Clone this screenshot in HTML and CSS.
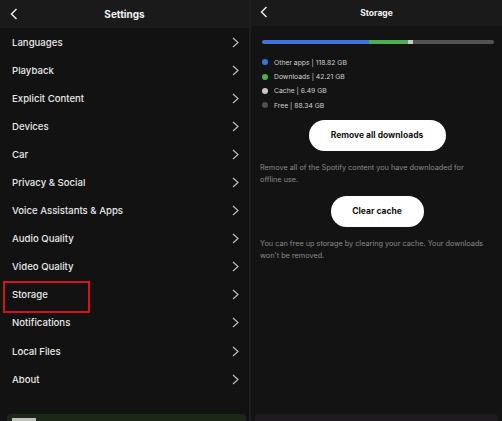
FILE: index.html
```html
<!DOCTYPE html>
<html>
<head>
<meta charset="utf-8">
<link rel="stylesheet" href="styles.css">
</head>
<body>
<div class="screen">
  <section class="panel settings">
    <header class="bar-head">
      <svg class="back" width="8" height="12" viewBox="0 0 8 12"><path d="M6.5 1 L1.5 6 L6.5 11" fill="none" stroke="#e8e8e8" stroke-width="1.5"/></svg>
      <h1 class="title">Settings</h1>
    </header>
    <ul class="list">
      <li class="row"><span>Languages</span><svg class="chev" width="7" height="11" viewBox="0 0 7 11"><path d="M1 1 L6 5.5 L1 10" fill="none" stroke="#bdbdbd" stroke-width="1.2"/></svg></li>
      <li class="row"><span>Playback</span><svg class="chev" width="7" height="11" viewBox="0 0 7 11"><path d="M1 1 L6 5.5 L1 10" fill="none" stroke="#bdbdbd" stroke-width="1.2"/></svg></li>
      <li class="row"><span>Explicit Content</span><svg class="chev" width="7" height="11" viewBox="0 0 7 11"><path d="M1 1 L6 5.5 L1 10" fill="none" stroke="#bdbdbd" stroke-width="1.2"/></svg></li>
      <li class="row"><span>Devices</span><svg class="chev" width="7" height="11" viewBox="0 0 7 11"><path d="M1 1 L6 5.5 L1 10" fill="none" stroke="#bdbdbd" stroke-width="1.2"/></svg></li>
      <li class="row"><span>Car</span><svg class="chev" width="7" height="11" viewBox="0 0 7 11"><path d="M1 1 L6 5.5 L1 10" fill="none" stroke="#bdbdbd" stroke-width="1.2"/></svg></li>
      <li class="row"><span>Privacy &amp; Social</span><svg class="chev" width="7" height="11" viewBox="0 0 7 11"><path d="M1 1 L6 5.5 L1 10" fill="none" stroke="#bdbdbd" stroke-width="1.2"/></svg></li>
      <li class="row"><span>Voice Assistants &amp; Apps</span><svg class="chev" width="7" height="11" viewBox="0 0 7 11"><path d="M1 1 L6 5.5 L1 10" fill="none" stroke="#bdbdbd" stroke-width="1.2"/></svg></li>
      <li class="row"><span>Audio Quality</span><svg class="chev" width="7" height="11" viewBox="0 0 7 11"><path d="M1 1 L6 5.5 L1 10" fill="none" stroke="#bdbdbd" stroke-width="1.2"/></svg></li>
      <li class="row"><span>Video Quality</span><svg class="chev" width="7" height="11" viewBox="0 0 7 11"><path d="M1 1 L6 5.5 L1 10" fill="none" stroke="#bdbdbd" stroke-width="1.2"/></svg></li>
      <li class="row highlighted"><span>Storage</span><svg class="chev" width="7" height="11" viewBox="0 0 7 11"><path d="M1 1 L6 5.5 L1 10" fill="none" stroke="#bdbdbd" stroke-width="1.2"/></svg></li>
      <li class="row"><span>Notifications</span><svg class="chev" width="7" height="11" viewBox="0 0 7 11"><path d="M1 1 L6 5.5 L1 10" fill="none" stroke="#bdbdbd" stroke-width="1.2"/></svg></li>
      <li class="row"><span>Local Files</span><svg class="chev" width="7" height="11" viewBox="0 0 7 11"><path d="M1 1 L6 5.5 L1 10" fill="none" stroke="#bdbdbd" stroke-width="1.2"/></svg></li>
      <li class="row"><span>About</span><svg class="chev" width="7" height="11" viewBox="0 0 7 11"><path d="M1 1 L6 5.5 L1 10" fill="none" stroke="#bdbdbd" stroke-width="1.2"/></svg></li>
    </ul>
    <div class="spacer"></div>
    <div class="mini green"><span class="thumb"></span></div>
  </section>
  <div class="divider"></div>
  <section class="panel storage">
    <header class="bar-head small">
      <svg class="back" width="8" height="12" viewBox="0 0 8 12"><path d="M6.5 1 L1.5 6 L6.5 11" fill="none" stroke="#e8e8e8" stroke-width="1.5"/></svg>
      <h1 class="title">Storage</h1>
    </header>
    <div class="content">
      <div class="usage">
        <span class="seg" style="width:46.3%;background:#3d73dd"></span>
        <span class="seg" style="width:16.5%;background:#4caf50"></span>
        <span class="seg" style="width:2.5%;background:#c8c8c8"></span>
        <span class="seg" style="width:34.7%;background:#535353"></span>
      </div>
      <ul class="legend">
        <li><i class="dot blue"></i>Other apps | 118.82 GB</li>
        <li><i class="dot greendot"></i>Downloads | 42.21 GB</li>
        <li><i class="dot grey"></i>Cache | 6.49 GB</li>
        <li><i class="dot dark"></i>Free | 88.34 GB</li>
      </ul>
      <div class="btn-wrap"><button class="pill wide">Remove all downloads</button></div>
      <p class="note narrow">Remove all of the Spotify content you have downloaded for offline use.</p>
      <div class="btn-wrap second"><button class="pill">Clear cache</button></div>
      <p class="note">You can free up storage by clearing your cache. Your downloads won't be removed.</p>
    </div>
    <div class="spacer"></div>
    <div class="mini purple"></div>
  </section>
</div>
</body>
</html>
```

FILE: styles.css
```css
*, *::before, *::after { box-sizing: border-box; }
html, body {
  margin: 0;
  padding: 0;
  background: #121212;
}
body {
  width: 502px;
  height: 421px;
  overflow: hidden;
  font-family: "Inter", "Noto Sans", sans-serif;
  color: #ececec;
}
.screen {
  display: flex;
  height: 421px;
}
.panel {
  display: flex;
  flex-direction: column;
  height: 421px;
  background: #121212;
}
.settings { width: 249px; }
.divider { width: 2px; background: #1e1e1e; }
.storage { flex: 1; background: #131313; }

.bar-head {
  position: relative;
  height: 28px;
  flex: none;
  background: #1a1a1a;
  display: flex;
  align-items: center;
  justify-content: center;
}
.bar-head.small { height: 26px; }
.bar-head .back {
  position: absolute;
  left: 10px;
  top: 8px;
}
.bar-head.small .back { left: 9px; top: 6px; }
.title {
  margin: 0;
  font-size: 10px;
  font-weight: 700;
  color: #f2f2f2;
}
.bar-head.small .title { font-size: 8.5px; }

.list {
  list-style: none;
  margin: 0;
  padding: 0;
}
.row {
  height: 28.1px;
  display: flex;
  align-items: center;
  justify-content: space-between;
  padding: 0 10px 0 12px;
  font-size: 9.6px;
  font-weight: 500;
  color: #e8e8e8;
}
.row.highlighted {
  position: relative;
}
.row.highlighted::before {
  content: "";
  position: absolute;
  left: 3px;
  top: 0;
  width: 87px;
  height: 32px;
  border: 2.5px solid #d3141c;
}
.spacer { flex: 1; }
.mini {
  height: 7px;
  flex: none;
  border-radius: 4px 4px 0 0;
}
.mini.green {
  margin: 0 3px 0 7px;
  background: #1d2718;
  position: relative;
}
.mini.green .thumb {
  position: absolute;
  left: 5px;
  top: 4px;
  width: 24px;
  height: 3px;
  background: #bfc3bb;
}
.mini.purple {
  margin: 0 4px 0 4px;
  background: #1e1a20;
}

.content {
  padding: 14px 8px 0 9px;
}
.usage {
  display: flex;
  height: 4px;
  margin: 0 0 0 2px;
  border-radius: 2px;
  overflow: hidden;
}
.seg { height: 100%; }
.legend {
  list-style: none;
  margin: 11px 0 0 0;
  padding: 0;
}
.legend li {
  height: 14.4px;
  display: flex;
  align-items: center;
  font-size: 6.8px;
  color: #d0d0d0;
}
.dot {
  width: 6px;
  height: 6px;
  border-radius: 50%;
  margin: 0 6px 0 2px;
}
.dot.blue { background: #3d73dd; }
.dot.greendot { background: #4caf50; }
.dot.grey { background: #c8c8c8; }
.dot.dark { background: #505050; }

.btn-wrap {
  display: flex;
  justify-content: center;
  margin-top: 7px;
}
.btn-wrap.second { margin-top: 10px; }
.pill {
  border: none;
  background: #ffffff;
  color: #121212;
  font-family: inherit;
  font-size: 8.5px;
  font-weight: 700;
  height: 31px;
  border-radius: 16px;
  padding: 0 20px;
  width: 93px;
}
.pill.wide { width: 137px; }
.note {
  margin: 11px 0 0 0;
  max-width: 228px;
  font-size: 7.3px;
  line-height: 12px;
  color: #8a8a8a;
}
.note.narrow { max-width: 212px; }
```
